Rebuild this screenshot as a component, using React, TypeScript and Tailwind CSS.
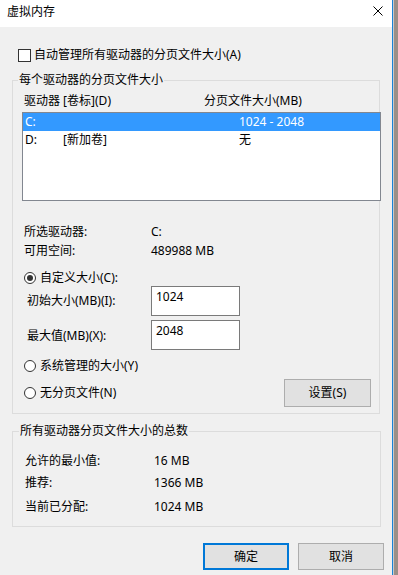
const font = "font-['Noto_Sans','Noto_Sans_CJK_SC',sans-serif] text-[12px] leading-[16px] text-black"

const drives = [
  { drive: "C:", label: "", size: "1024 - 2048", selected: true },
  { drive: "D:", label: "[新加卷]", size: "无", selected: false }
]

const totals = [
  { label: "允许的最小值:", value: "16 MB", mt: "mt-[14px]" },
  { label: "推荐:", value: "1366 MB", mt: "mt-[6px]" },
  { label: "当前已分配:", value: "1024 MB", mt: "mt-[8px]" }
]

function Radio({ checked }: { checked?: boolean }) {
  return (
    <span className="w-[12px] h-[12px] rounded-full border border-[#333] bg-white flex items-center justify-center shrink-0">
      {checked && <span className="w-[6px] h-[6px] rounded-full bg-[#333]" />}
    </span>
  )
}

export default function App() {
  return (
    <div className={`w-[398px] h-[575px] flex ${font}`}>
      <div className="w-[392px] h-full bg-[#f0f0f0] flex flex-col">
        {/* 标题栏 */}
        <div className="h-[27px] bg-white flex items-start justify-between shrink-0">
          <span className="pl-[7px] pt-[4px]">虚拟内存</span>
          <svg className="w-[10px] h-[10px] mt-[6px] mr-[9px]" viewBox="0 0 10 10" fill="none" stroke="#000" strokeWidth="1">
            <path d="M0.5 0.5 L9.5 9.5 M9.5 0.5 L0.5 9.5" />
          </svg>
        </div>

        {/* 自动管理 */}
        <div className="mt-[20px] h-[16px] flex items-center pl-[18px] gap-[3px]">
          <span className="w-[13px] h-[13px] border border-[#333] bg-white shrink-0" />
          <span>自动管理所有驱动器的分页文件大小(A)</span>
        </div>

        {/* 每个驱动器 */}
        <fieldset className="mt-[9px] ml-[12px] w-[368px] min-w-0 border border-[#dcdcdc] pb-[6px]">
          <legend className="ml-[5px] px-px">每个驱动器的分页文件大小</legend>
          <div className="mt-[5px] ml-[11px] flex">
            <span className="w-[180px]">驱动器 [卷标](D)</span>
            <span>分页文件大小(MB)</span>
          </div>
          <div className="mt-[3px] ml-[9px] w-[359px] h-[89px] border border-[#828790] bg-white">
            {drives.map((d) => (
              <div
                key={d.drive}
                className={`h-[18px] px-[2px] flex items-center ${d.selected ? "bg-[#3399ff] text-white" : ""}`}
              >
                <span className="w-[38px]">{d.drive}</span>
                <span className="w-[176px]">{d.label}</span>
                <span>{d.size}</span>
              </div>
            ))}
          </div>

          <div className="mt-[23px] ml-[11px] flex">
            <span className="w-[127px]">所选驱动器:</span>
            <span>C:</span>
          </div>
          <div className="mt-[3px] ml-[11px] flex">
            <span className="w-[127px]">可用空间:</span>
            <span>489988 MB</span>
          </div>

          <div className="mt-[11px] ml-[11px] h-[16px] flex items-center gap-[4px]">
            <Radio checked />
            <span>自定义大小(C):</span>
          </div>
          <div className="ml-[14px] h-[30px] flex items-center">
            <span className="w-[124px]">初始大小(MB)(I):</span>
            <div className="w-[89px] h-[30px] border border-[#7a7a7a] bg-white pl-[4px] pt-[2px]">1024</div>
          </div>
          <div className="mt-[4px] ml-[14px] h-[30px] flex items-center">
            <span className="w-[124px] pt-[2px]">最大值(MB)(X):</span>
            <div className="w-[89px] h-[30px] border border-[#7a7a7a] bg-white pl-[4px] pt-[2px]">2048</div>
          </div>

          <div className="mt-[8px] ml-[11px] h-[16px] flex items-center gap-[4px]">
            <Radio />
            <span>系统管理的大小(Y)</span>
          </div>
          <div className="mt-[5px] ml-[11px] mr-[8px] h-[28px] flex items-center">
            <Radio />
            <span className="ml-[4px]">无分页文件(N)</span>
            <button className="ml-auto w-[87px] h-[28px] border border-[#adadad] bg-[#e1e1e1]">设置(S)</button>
          </div>
        </fieldset>

        {/* 总数 */}
        <fieldset className="mt-[9px] ml-[12px] w-[369px] min-w-0 border border-[#dcdcdc] pb-[11px]">
          <legend className="ml-[6px] px-px">所有驱动器分页文件大小的总数</legend>
          {totals.map((t) => (
            <div key={t.label} className={`${t.mt} ml-[12px] flex`}>
              <span className="w-[129px]">{t.label}</span>
              <span>{t.value}</span>
            </div>
          ))}
        </fieldset>

        <div className="mt-[16px] pr-[8px] flex justify-end gap-[9px]">
          <button className="w-[86px] h-[27px] border-2 border-[#0078d7] bg-[#e1e1e1]">确定</button>
          <button className="w-[86px] h-[27px] border border-[#adadad] bg-[#e1e1e1]">取消</button>
        </div>
      </div>
      <div className="w-px h-full bg-[#1883d7]" />
      <div className="w-px h-full bg-[#c9c9c9]" />
      <div className="flex-1 h-full bg-[#9b8f87]" />
    </div>
  )
}
